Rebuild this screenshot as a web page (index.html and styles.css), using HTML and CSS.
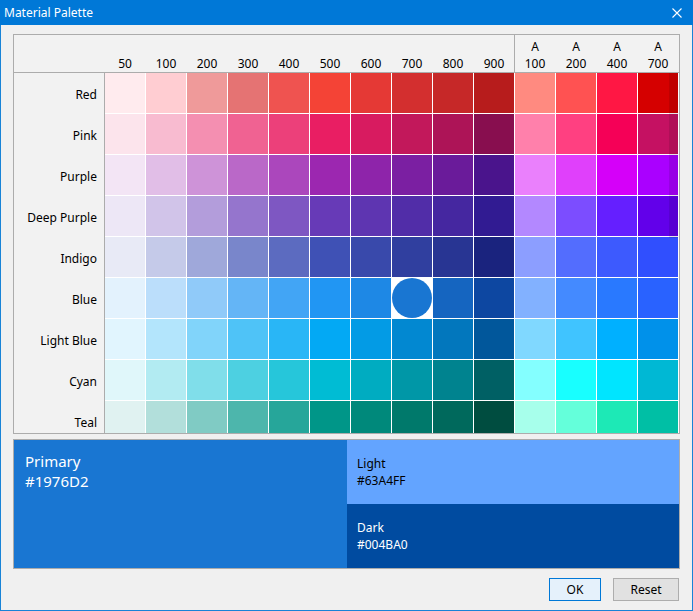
FILE: index.html
```html
<!DOCTYPE html>
<html>
<head>
<meta charset="utf-8">
<title>Material Palette</title>
<link rel="stylesheet" href="styles.css">
</head>
<body>
<div class="window">
  <div class="titlebar">
    <span class="title">Material Palette</span>
    <svg class="close" width="10" height="10" viewBox="0 0 10 10"><path d="M0.5 0.5 L9.5 9.5 M9.5 0.5 L0.5 9.5" stroke="#fff" stroke-width="1.1" fill="none"/></svg>
  </div>
  <div class="content">
    <div class="palette">
      <div class="head">
        <div class="corner"></div>
        <div class="hcell">50</div>
        <div class="hcell">100</div>
        <div class="hcell">200</div>
        <div class="hcell">300</div>
        <div class="hcell">400</div>
        <div class="hcell">500</div>
        <div class="hcell">600</div>
        <div class="hcell">700</div>
        <div class="hcell">800</div>
        <div class="hcell last-primary">900</div>
        <div class="hcell"><span>A</span><span>100</span></div>
        <div class="hcell"><span>A</span><span>200</span></div>
        <div class="hcell"><span>A</span><span>400</span></div>
        <div class="hcell"><span>A</span><span>700</span></div>
      </div>
      <div class="rows">
        <div class="row"><div class="label">Red</div><div class="swatches">
          <div class="sw" style="background:#FFEBEE"></div><div class="sw" style="background:#FFCDD2"></div><div class="sw" style="background:#EF9A9A"></div><div class="sw" style="background:#E57373"></div><div class="sw" style="background:#EF5350"></div><div class="sw" style="background:#F44336"></div><div class="sw" style="background:#E53935"></div><div class="sw" style="background:#D32F2F"></div><div class="sw" style="background:#C62828"></div><div class="sw" style="background:#B71C1C"></div><div class="sw" style="background:#FF8A80"></div><div class="sw" style="background:#FF5252"></div><div class="sw" style="background:#FF1744"></div><div class="sw" style="background:#D50000"></div>
        </div></div>
        <div class="row"><div class="label">Pink</div><div class="swatches">
          <div class="sw" style="background:#FCE4EC"></div><div class="sw" style="background:#F8BBD0"></div><div class="sw" style="background:#F48FB1"></div><div class="sw" style="background:#F06292"></div><div class="sw" style="background:#EC407A"></div><div class="sw" style="background:#E91E63"></div><div class="sw" style="background:#D81B60"></div><div class="sw" style="background:#C2185B"></div><div class="sw" style="background:#AD1457"></div><div class="sw" style="background:#880E4F"></div><div class="sw" style="background:#FF80AB"></div><div class="sw" style="background:#FF4081"></div><div class="sw" style="background:#F50057"></div><div class="sw" style="background:#C51162"></div>
        </div></div>
        <div class="row"><div class="label">Purple</div><div class="swatches">
          <div class="sw" style="background:#F3E5F5"></div><div class="sw" style="background:#E1BEE7"></div><div class="sw" style="background:#CE93D8"></div><div class="sw" style="background:#BA68C8"></div><div class="sw" style="background:#AB47BC"></div><div class="sw" style="background:#9C27B0"></div><div class="sw" style="background:#8E24AA"></div><div class="sw" style="background:#7B1FA2"></div><div class="sw" style="background:#6A1B9A"></div><div class="sw" style="background:#4A148C"></div><div class="sw" style="background:#EA80FC"></div><div class="sw" style="background:#E040FB"></div><div class="sw" style="background:#D500F9"></div><div class="sw" style="background:#AA00FF"></div>
        </div></div>
        <div class="row"><div class="label">Deep Purple</div><div class="swatches">
          <div class="sw" style="background:#EDE7F6"></div><div class="sw" style="background:#D1C4E9"></div><div class="sw" style="background:#B39DDB"></div><div class="sw" style="background:#9575CD"></div><div class="sw" style="background:#7E57C2"></div><div class="sw" style="background:#673AB7"></div><div class="sw" style="background:#5E35B1"></div><div class="sw" style="background:#512DA8"></div><div class="sw" style="background:#4527A0"></div><div class="sw" style="background:#311B92"></div><div class="sw" style="background:#B388FF"></div><div class="sw" style="background:#7C4DFF"></div><div class="sw" style="background:#651FFF"></div><div class="sw" style="background:#6200EA"></div>
        </div></div>
        <div class="row"><div class="label">Indigo</div><div class="swatches">
          <div class="sw" style="background:#E8EAF6"></div><div class="sw" style="background:#C5CAE9"></div><div class="sw" style="background:#9FA8DA"></div><div class="sw" style="background:#7986CB"></div><div class="sw" style="background:#5C6BC0"></div><div class="sw" style="background:#3F51B5"></div><div class="sw" style="background:#3949AB"></div><div class="sw" style="background:#303F9F"></div><div class="sw" style="background:#283593"></div><div class="sw" style="background:#1A237E"></div><div class="sw" style="background:#8C9EFF"></div><div class="sw" style="background:#536DFE"></div><div class="sw" style="background:#3D5AFE"></div><div class="sw" style="background:#304FFE"></div>
        </div></div>
        <div class="row"><div class="label">Blue</div><div class="swatches">
          <div class="sw" style="background:#E3F2FD"></div><div class="sw" style="background:#BBDEFB"></div><div class="sw" style="background:#90CAF9"></div><div class="sw" style="background:#64B5F6"></div><div class="sw" style="background:#42A5F5"></div><div class="sw" style="background:#2196F3"></div><div class="sw" style="background:#1E88E5"></div><div class="sw selected"><div class="dot" style="background:#1976D2"></div></div><div class="sw" style="background:#1565C0"></div><div class="sw" style="background:#0D47A1"></div><div class="sw" style="background:#82B1FF"></div><div class="sw" style="background:#448AFF"></div><div class="sw" style="background:#2979FF"></div><div class="sw" style="background:#2962FF"></div>
        </div></div>
        <div class="row"><div class="label">Light Blue</div><div class="swatches">
          <div class="sw" style="background:#E1F5FE"></div><div class="sw" style="background:#B3E5FC"></div><div class="sw" style="background:#81D4FA"></div><div class="sw" style="background:#4FC3F7"></div><div class="sw" style="background:#29B6F6"></div><div class="sw" style="background:#03A9F4"></div><div class="sw" style="background:#039BE5"></div><div class="sw" style="background:#0288D1"></div><div class="sw" style="background:#0277BD"></div><div class="sw" style="background:#01579B"></div><div class="sw" style="background:#80D8FF"></div><div class="sw" style="background:#40C4FF"></div><div class="sw" style="background:#00B0FF"></div><div class="sw" style="background:#0091EA"></div>
        </div></div>
        <div class="row"><div class="label">Cyan</div><div class="swatches">
          <div class="sw" style="background:#E0F7FA"></div><div class="sw" style="background:#B2EBF2"></div><div class="sw" style="background:#80DEEA"></div><div class="sw" style="background:#4DD0E1"></div><div class="sw" style="background:#26C6DA"></div><div class="sw" style="background:#00BCD4"></div><div class="sw" style="background:#00ACC1"></div><div class="sw" style="background:#0097A7"></div><div class="sw" style="background:#00838F"></div><div class="sw" style="background:#006064"></div><div class="sw" style="background:#84FFFF"></div><div class="sw" style="background:#18FFFF"></div><div class="sw" style="background:#00E5FF"></div><div class="sw" style="background:#00B8D4"></div>
        </div></div>
        <div class="row"><div class="label">Teal</div><div class="swatches">
          <div class="sw" style="background:#E0F2F1"></div><div class="sw" style="background:#B2DFDB"></div><div class="sw" style="background:#80CBC4"></div><div class="sw" style="background:#4DB6AC"></div><div class="sw" style="background:#26A69A"></div><div class="sw" style="background:#009688"></div><div class="sw" style="background:#00897B"></div><div class="sw" style="background:#00796B"></div><div class="sw" style="background:#00695C"></div><div class="sw" style="background:#004D40"></div><div class="sw" style="background:#A7FFEB"></div><div class="sw" style="background:#64FFDA"></div><div class="sw" style="background:#1DE9B6"></div><div class="sw" style="background:#00BFA5"></div>
        </div></div>
      </div>
      <div class="thumb"></div>
    </div>
    <div class="preview">
      <div class="primary">
        <div>Primary</div>
        <div>#1976D2</div>
      </div>
      <div class="variants">
        <div class="light">
          <div>Light</div>
          <div>#63A4FF</div>
        </div>
        <div class="dark">
          <div>Dark</div>
          <div>#004BA0</div>
        </div>
      </div>
    </div>
    <div class="buttons">
      <button class="btn btn-default">OK</button>
      <button class="btn">Reset</button>
    </div>
  </div>
</div>
</body>
</html>
```
FILE: styles.css
```css
* { box-sizing: border-box; }
html, body { margin: 0; padding: 0; }
body {
  width: 693px;
  height: 611px;
  overflow: hidden;
  font-family: "Noto Sans", "Open Sans", sans-serif;
  font-size: 12px;
  color: #000;
}
.window {
  width: 693px;
  height: 611px;
  border: 1px solid #1883d7;
  border-top: none;
  background: #f0f0f0;
  display: flex;
  flex-direction: column;
}
.titlebar {
  height: 25px;
  margin: 0 -1px;
  background: #0078d7;
  display: flex;
  align-items: center;
  justify-content: space-between;
  padding: 0 11px 0 4px;
  color: #fff;
  font-size: 12px;
}
.title { line-height: 16px; }
.close { display: block; }
.content {
  padding: 9px 12px 0 12px;
  display: flex;
  flex-direction: column;
}
.palette {
  position: relative;
  width: 667px;
  height: 400px;
  border: 1px solid #acacac;
  background: #f2f2f2;
  overflow: hidden;
}
.head {
  display: flex;
  height: 38px;
  border-bottom: 1px solid #acacac;
}
.corner { width: 91px; flex: none; }
.hcell {
  width: 41px;
  flex: none;
  display: flex;
  flex-direction: column;
  justify-content: flex-end;
  align-items: center;
  line-height: 17px;
  padding-right: 1px;
  padding-bottom: 0;
}
.hcell.last-primary { box-shadow: inset -1px 0 0 #acacac; }
.rows { display: flex; flex-direction: column; }
.row { display: flex; height: 41px; flex: none; }
.label {
  width: 91px;
  flex: none;
  border-right: 1px solid #acacac;
  display: flex;
  align-items: center;
  justify-content: flex-end;
  padding-right: 7px;
  padding-top: 1px;
}
.swatches {
  display: flex;
  background: #fff;
}
.sw {
  width: 40px;
  height: 40px;
  margin: 0 1px 1px 0;
  flex: none;
}
.sw.selected {
  background: #fff;
  display: flex;
  align-items: center;
  justify-content: center;
}
.dot {
  width: 40px;
  height: 40px;
  border-radius: 50%;
}
.thumb {
  position: absolute;
  left: 655px;
  top: 38px;
  width: 9px;
  height: 165px;
  background: rgba(0, 0, 0, 0.1);
}
.preview {
  margin-top: 5px;
  width: 667px;
  height: 130px;
  border: 1px solid #acacac;
  display: flex;
}
.primary {
  width: 333px;
  flex: none;
  background: #1976d2;
  color: #fff;
  font-size: 15px;
  line-height: 20px;
  padding: 11px 11px;
}
.variants {
  flex: 1;
  display: flex;
  flex-direction: column;
}
.light, .dark {
  height: 64px;
  padding: 15px 10px 0;
  line-height: 17px;
  font-size: 12px;
}
.light { background: #63a4ff; color: #000; }
.dark { background: #004ba0; color: #fff; }
.buttons {
  margin-top: 9px;
  margin-right: 1px;
  display: flex;
  justify-content: flex-end;
  gap: 12px;
}
.btn {
  height: 23px;
  font-family: "Noto Sans", "Open Sans", sans-serif;
  font-size: 12px;
  color: #000;
  border: 1px solid #adadad;
  background: #e1e1e1;
  padding: 0;
  width: 66px;
  line-height: 19px;
}
.btn-default {
  width: 52px;
  border-color: #0078d7;
  background: #e5f1fb;
}
```
